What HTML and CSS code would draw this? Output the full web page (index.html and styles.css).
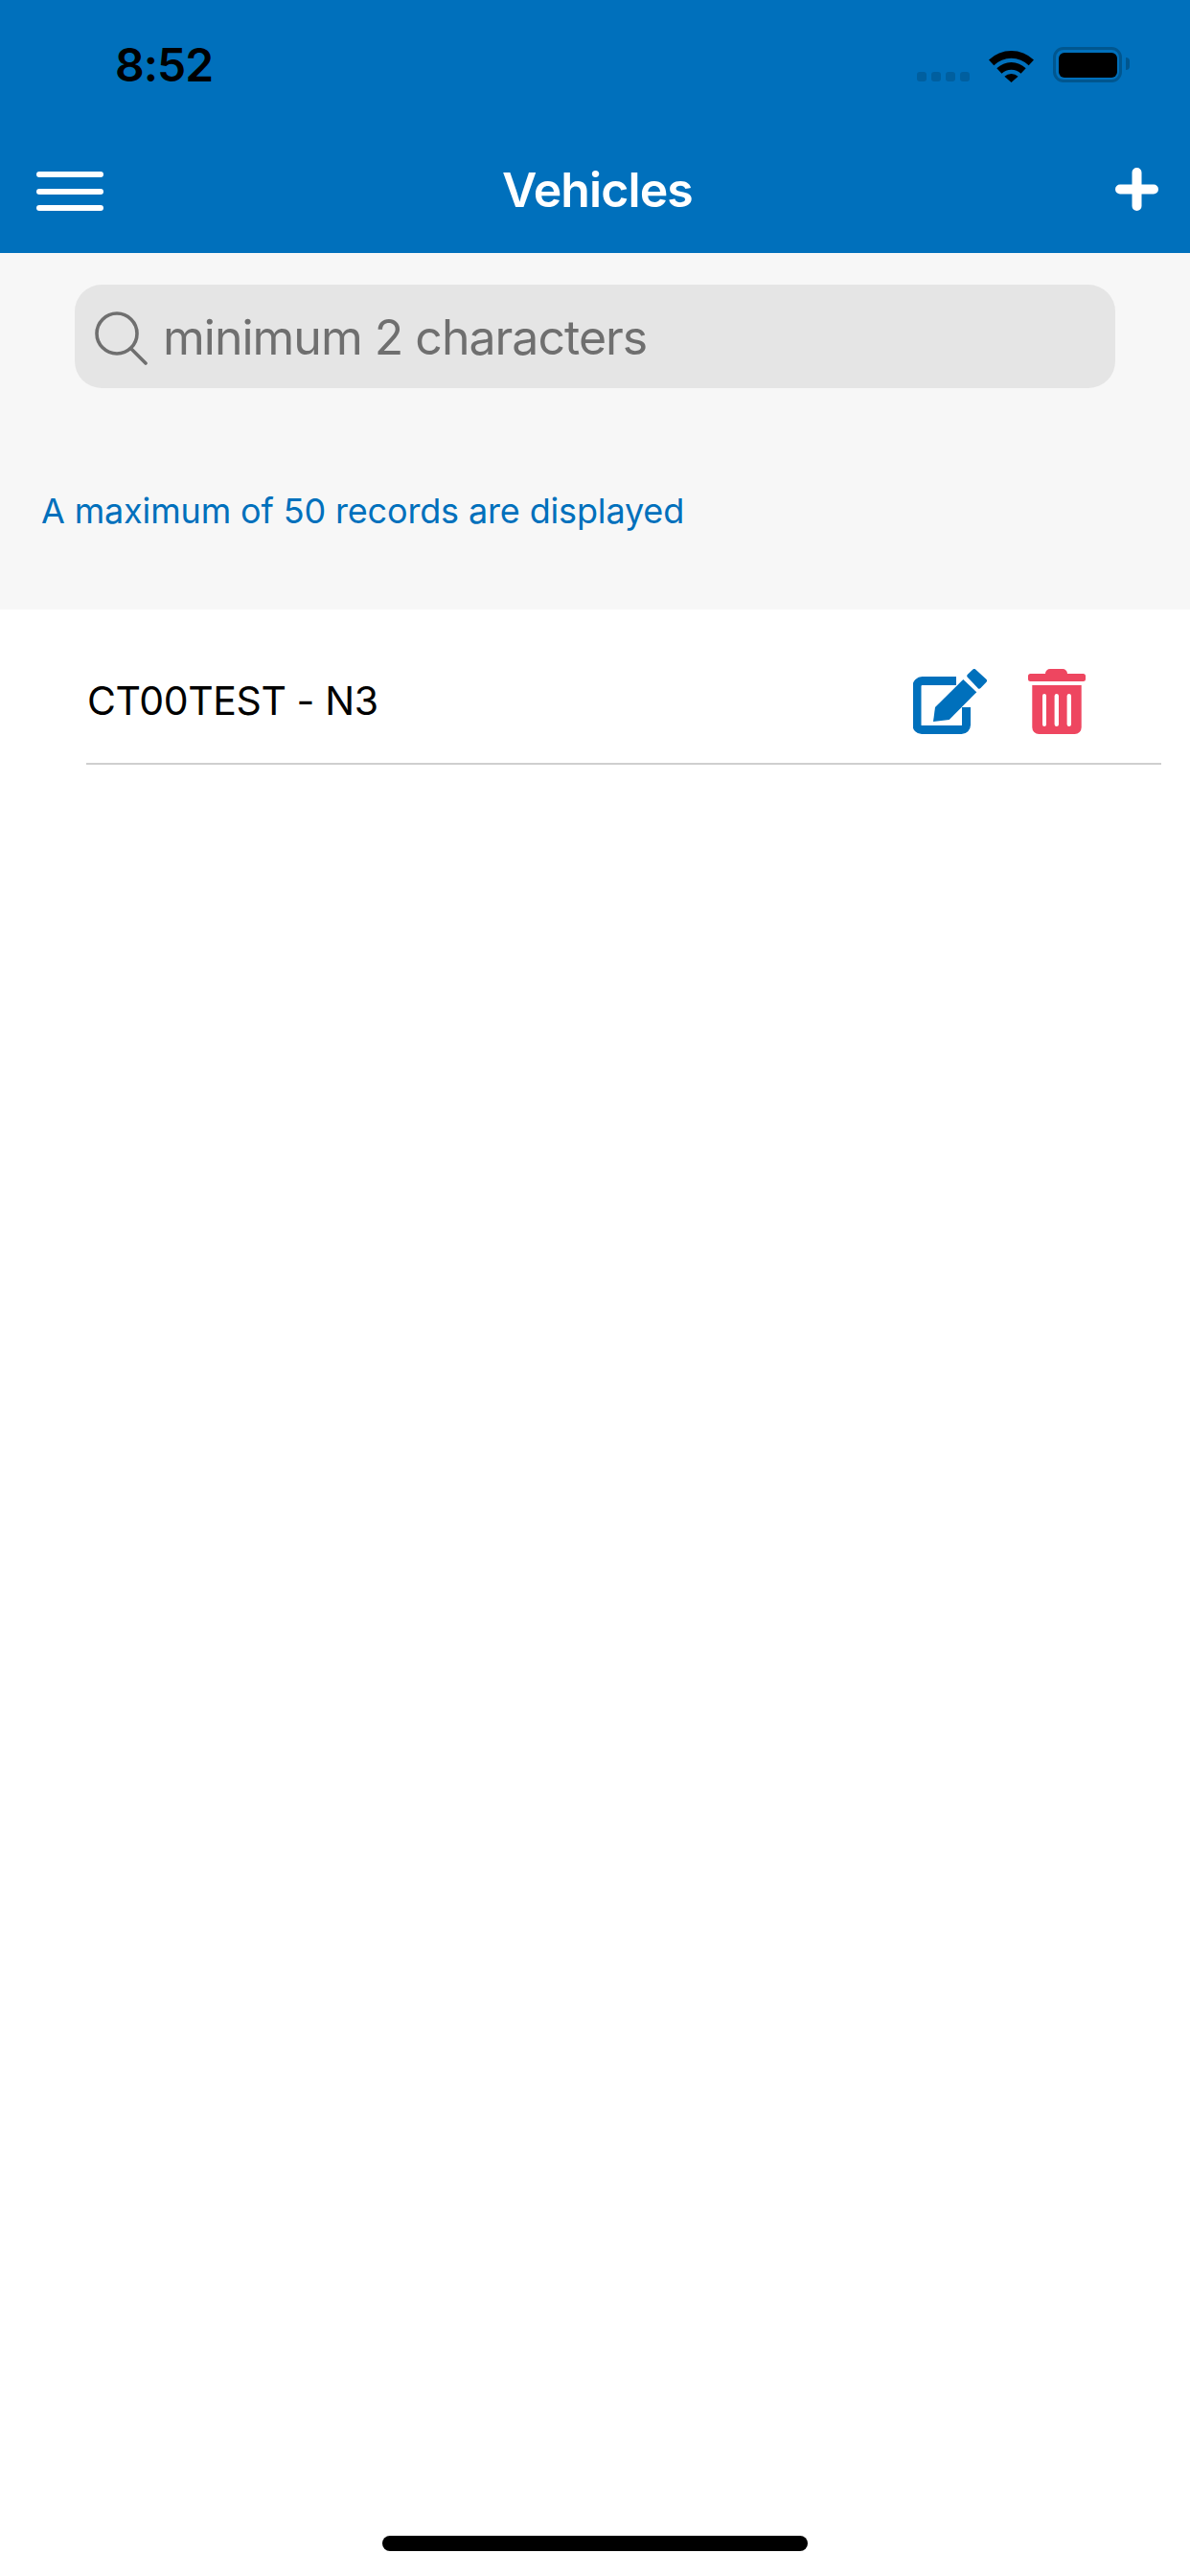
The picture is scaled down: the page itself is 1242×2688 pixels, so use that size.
FILE: index.html
```html
<!DOCTYPE html>
<html lang="en">
<head>
  <meta charset="UTF-8">
  <meta name="viewport" content="width=device-width, initial-scale=1.0">
  <title>Vehicles</title>
  <link rel="stylesheet" href="styles.css">
</head>
<body>
  <header class="header">
    <div class="status">
      <span class="time">8:52</span>
      <div class="status-icons">
        <div class="signal"><i></i><i></i><i></i><i></i></div>
        <svg class="wifi" viewBox="0 0 47 36">
          <path d="M0 12.5 A34 34 0 0 1 47 12.5 L41.7 18.3 A26 26 0 0 0 5.3 18.3 Z"/>
          <path d="M8.3 21.2 A22 22 0 0 1 38.7 21.2 L33.5 26.8 A14.5 14.5 0 0 0 13.5 26.8 Z"/>
          <path d="M16.4 29.7 A10.5 10.5 0 0 1 30.6 29.7 L23.5 36 Z"/>
        </svg>
        <div class="battery"><div class="battery-level"></div></div>
      </div>
    </div>
    <nav class="nav">
      <button class="menu"><span></span><span></span><span></span></button>
      <h1 class="title">Vehicles</h1>
      <svg class="add" viewBox="0 0 45 45">
        <path d="M22.5 5 V40 M5 22.5 H40" fill="none" stroke="#fff" stroke-width="10" stroke-linecap="round"/>
      </svg>
    </nav>
  </header>

  <section class="filter">
    <div class="search">
      <svg class="search-icon" viewBox="0 0 56 56">
        <circle cx="23" cy="23" r="21" fill="none" stroke="#6f6f6f" stroke-width="3.6"/>
        <path d="M38 39 L53 54" fill="none" stroke="#6f6f6f" stroke-width="3.6" stroke-linecap="round"/>
      </svg>
      <span class="placeholder">minimum 2 characters</span>
    </div>
    <p class="notice">A maximum of 50 records are displayed</p>
  </section>

  <main class="list">
    <div class="row">
      <span class="row-name">CT00TEST - N3</span>
      <div class="row-actions">
        <svg class="edit" viewBox="0 0 77 68">
          <path d="M45 12.5 H9.5 A5.5 5.5 0 0 0 4 18 V58.5 A5 5 0 0 0 9 63.5 H50.5 A5 5 0 0 0 55.5 58.5 V40" fill="none" stroke="#0070bc" stroke-width="9"/>
          <path d="M21 55 L23 40 L52.3 11 L66.3 24.3 L37.7 53 Z" fill="#0070bc"/>
          <path d="M63.8 2 L75 12.3 L69 18.7 L58.3 7.3 Z" fill="#0070bc" stroke="#0070bc" stroke-width="4" stroke-linejoin="round"/>
        </svg>
        <svg class="trash" viewBox="0 0 60 68">
          <path d="M18 5 A5 5 0 0 1 23 0 H36 A5 5 0 0 1 41 5 H57.5 A2.5 2.5 0 0 1 60 7.5 V10.5 A2.5 2.5 0 0 1 57.5 13 H2.5 A2.5 2.5 0 0 1 0 10.5 V7.5 A2.5 2.5 0 0 1 2.5 5 Z" fill="#ee4660"/>
          <path fill-rule="evenodd" fill="#ee4660" d="M4.3 17 H55.7 V61 A7 7 0 0 1 48.7 68 H11.3 A7 7 0 0 1 4.3 61 Z M17 26 A2 2 0 0 0 15 28 V58 A2 2 0 0 0 17 60 A2 2 0 0 0 19 58 V28 A2 2 0 0 0 17 26 Z M29.8 26 A2.2 2.2 0 0 0 27.6 28 V58 A2.2 2.2 0 0 0 29.8 60 A2.2 2.2 0 0 0 32 58 V28 A2.2 2.2 0 0 0 29.8 26 Z M42.8 26 A2.2 2.2 0 0 0 40.6 28 V58 A2.2 2.2 0 0 0 42.8 60 A2.2 2.2 0 0 0 45 58 V28 A2.2 2.2 0 0 0 42.8 26 Z"/>
        </svg>
      </div>
    </div>
  </main>

  <div class="home-bar"></div>
</body>
</html>
```

FILE: styles.css
```css
body {
  font-family: Inter, "Liberation Sans", sans-serif;
  display: flex;
  flex-direction: column;
  height: 100vh;
  margin: 0;
  background-color: #fff;
}

/* top bar */
.header {
  background-color: #0070bc;
}
.status {
  display: flex;
  justify-content: space-between;
  align-items: flex-start;
  box-sizing: border-box;
  height: 132px;
  padding: 49px 64px 0 120px;
}
.time {
  font-size: 48px;
  font-weight: 600;
  letter-spacing: -1px;
  line-height: 38px;
  color: #000;
}
.status-icons {
  display: flex;
  align-items: flex-end;
  gap: 20px;
}
.signal {
  display: flex;
  gap: 5px;
  margin-bottom: 1px;
}
.signal i {
  width: 10px;
  height: 10px;
  border-radius: 3px;
  background-color: #005f9f;
}
.wifi {
  display: block;
  width: 47px;
  height: 36px;
}
.battery {
  position: relative;
  box-sizing: border-box;
  width: 72px;
  height: 37px;
  margin-right: 7px;
  padding: 2.5px;
  border: 3.5px solid #00568f;
  border-radius: 11px;
}
.battery::after {
  content: "";
  position: absolute;
  top: 8px;
  right: -11px;
  width: 4px;
  height: 13px;
  border-radius: 0 6px 6px 0;
  background-color: #00568f;
}
.battery-level {
  height: 100%;
  border-radius: 6px;
  background-color: #000;
}

.nav {
  display: grid;
  grid-template-columns: 1fr auto 1fr;
  align-items: center;
  height: 132px;
  padding: 0 33px 0 38px;
}
.menu {
  display: flex;
  flex-direction: column;
  gap: 11.5px;
  width: 70px;
  margin-top: 3px;
  padding: 0;
  border: none;
  background: none;
}
.menu span {
  display: block;
  height: 6px;
  border-radius: 3px;
  background-color: #fff;
}
.title {
  margin: 0;
  font-size: 50px;
  font-weight: 600;
  letter-spacing: -0.9px;
  color: #fff;
}
.add {
  justify-self: end;
  width: 45px;
  height: 45px;
  margin-bottom: 2px;
}

/* search area */
.filter {
  padding: 33px 0 81px;
  background-color: #f7f7f7;
}
.search {
  display: flex;
  align-items: center;
  gap: 15px;
  box-sizing: border-box;
  height: 108px;
  margin: 0 78px;
  padding: 2px 0 0 21px;
  border-radius: 28px;
  background-color: #e5e5e5;
}
.search-icon {
  width: 56px;
  height: 56px;
  margin-top: 2px;
}
.placeholder {
  font-size: 50px;
  letter-spacing: -1px;
  color: #6f6f6f;
}
.notice {
  margin: 106px 0 0;
  padding-left: 43px;
  font-size: 36px;
  letter-spacing: -0.15px;
  line-height: 44px;
  color: #0070bc;
}

/* vehicle rows */
.list {
  flex: 1;
}
.row {
  display: flex;
  justify-content: space-between;
  align-items: center;
  margin: 0 30px 0 90px;
  padding: 62px 79px 30px 1px;
  border-bottom: 2px solid #cfcfcf;
}
.row-name {
  margin-bottom: 2px;
  font-size: 41px;
  letter-spacing: -0.4px;
  color: #000;
}
.row-actions {
  display: flex;
  gap: 43px;
}
.edit {
  width: 77px;
  height: 68px;
}
.trash {
  width: 60px;
  height: 68px;
}

.home-bar {
  align-self: center;
  width: 444px;
  height: 16px;
  margin-bottom: 26px;
  border-radius: 8px;
  background-color: #000;
}
```
